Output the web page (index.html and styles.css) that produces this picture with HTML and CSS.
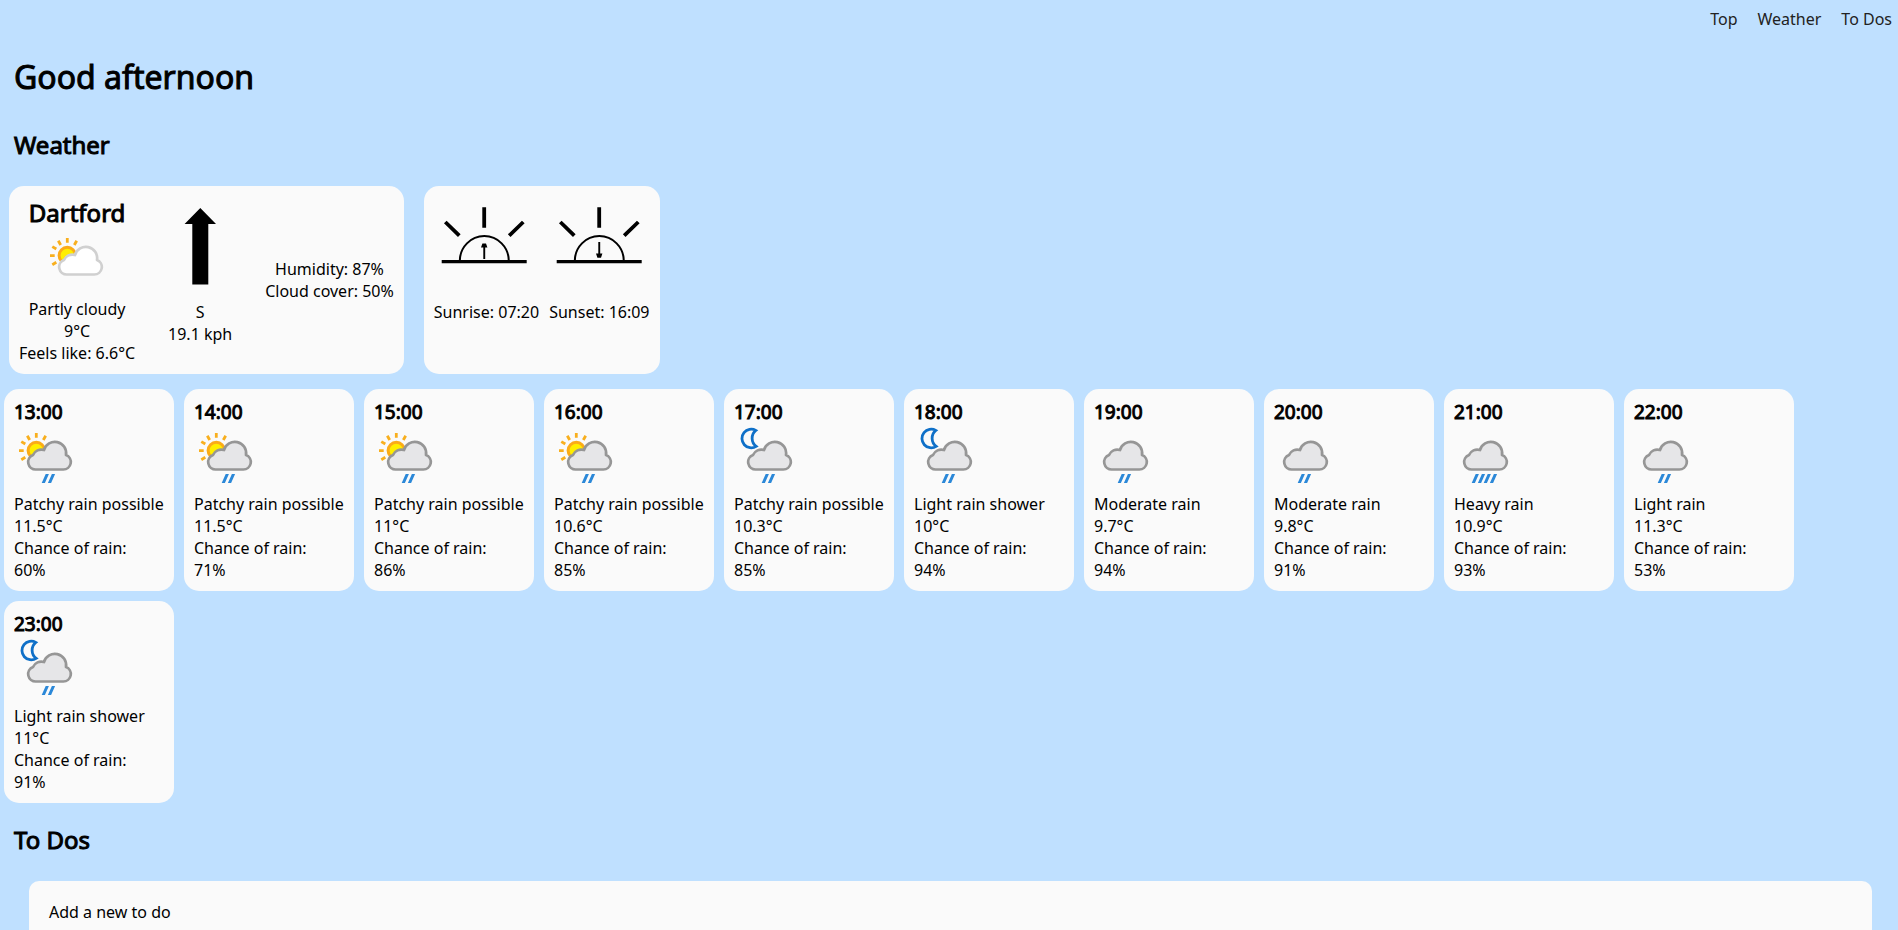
FILE: index.html
```html
<!DOCTYPE html>
<html lang="en">
<head>
<meta charset="utf-8">
<title>Dashboard</title>
<link rel="stylesheet" href="styles.css">
</head>
<body>
<svg class="sprite" aria-hidden="true">
  <symbol id="cloud" viewBox="0 0 64 64">
    <path d="M22 45.5A7.5 7.5 0 0 1 19 31A9 9 0 0 1 30 26A11.3 11.3 0 0 1 52 31A7.5 7.5 0 0 1 49.3 45.5Z" stroke-width="2.7" stroke-linejoin="round"/>
  </symbol>
  <symbol id="sun" viewBox="0 0 64 64">
    <circle cx="22.3" cy="26.5" r="8.2" fill="#ffee00" stroke="#fbab18" stroke-width="3"/>
    <path d="M22.3 9V13.8M31.7 11.7L29.3 16M13.3 11.7L15.7 16M7.3 17.6L11.3 20M5 26.6H9.7M7.3 35.7L11.3 33.3" stroke="#f8af1e" stroke-width="2.8" fill="none"/>
  </symbol>
  <symbol id="moon" viewBox="0 0 64 64">
    <path d="M21.8 6.4A9.3 9.3 0 1 0 22.2 22.4A10.2 10.2 0 0 1 21.8 6.4Z" fill="#fafafa" stroke="#0f70c8" stroke-width="2.8"/>
  </symbol>
  <symbol id="drops" viewBox="0 0 64 64">
    <path d="M31.7 50H34.9L30.9 59H27.7ZM37.9 50H41.1L37.1 59H33.9Z" fill="#2b88d8"/>
  </symbol>
  <symbol id="day-rain" viewBox="0 0 64 64">
    <use href="#sun"/><use href="#cloud" class="grey"/><use href="#drops"/>
  </symbol>
  <symbol id="night-rain" viewBox="0 0 64 64">
    <use href="#moon"/><use href="#cloud" class="grey"/><use href="#drops"/>
  </symbol>
  <symbol id="rain" viewBox="4 0 64 64">
    <use href="#cloud" class="grey" width="64" height="64"/><use href="#drops" width="64" height="64"/>
  </symbol>
  <symbol id="heavy-rain" viewBox="4 0 64 64">
    <use href="#cloud" class="grey" width="64" height="64"/><use href="#drops" x="-6" width="64" height="64"/><use href="#drops" x="6" width="64" height="64"/>
  </symbol>
  <symbol id="horizon" viewBox="0 0 100 100">
    <path d="M50.2 11.3V31.7M11.3 26L25.3 39.7M89.3 26L75.2 39.7" stroke="#000" stroke-width="3.8"/>
    <path d="M25.8 65A24.5 25 0 0 1 74.8 65" fill="none" stroke="#000" stroke-width="2"/>
    <path d="M7.7 65.6H92.7" stroke="#000" stroke-width="3.2"/>
  </symbol>
</svg>

<nav class="nav">
  <a href="#top">Top</a>
  <a href="#weather">Weather</a>
  <a href="#todos">To Dos</a>
</nav>

<main id="top">
  <h1>Good afternoon</h1>

  <section id="weather">
    <h2>Weather</h2>
    <div class="current">
      <div class="card now">
        <div class="now-col">
          <h2 class="place">Dartford</h2>
          <svg class="icon" viewBox="0 0 64 64"><use href="#sun"/><use href="#cloud" class="white"/></svg>
          <p>Partly cloudy</p><p>9°C</p><p>Feels like: 6.6°C</p>
        </div>
        <div class="now-col">
          <svg class="dial" viewBox="0 0 100 100"><path d="M50.3 12L66 28H58.3V88.4H42.3V28H34.6Z"/></svg>
          <p>S</p><p>19.1 kph</p>
        </div>
        <div class="now-col middle">
          <p>Humidity: 87%</p><p>Cloud cover: 50%</p>
        </div>
      </div>
      <div class="card sun-times">
        <div>
          <svg class="dial" viewBox="0 0 100 100"><use href="#horizon"/><path d="M49.3 63V51.5H47L48.4 47.4H52L53.4 51.5H51.2V63Z"/></svg>
          <p>Sunrise: 07:20</p>
        </div>
        <div>
          <svg class="dial" viewBox="0 0 100 100"><use href="#horizon"/><path d="M49.3 46V57.5H47L48.4 61.8H52L53.4 57.5H51.2V46Z"/></svg>
          <p>Sunset: 16:09</p>
        </div>
      </div>
    </div>

    <div class="hours">
      <article class="card hour"><h3>13:00</h3><svg class="icon"><use href="#day-rain"/></svg><p>Patchy rain possible</p><p>11.5°C</p><p>Chance of rain:</p><p>60%</p></article>
      <article class="card hour"><h3>14:00</h3><svg class="icon"><use href="#day-rain"/></svg><p>Patchy rain possible</p><p>11.5°C</p><p>Chance of rain:</p><p>71%</p></article>
      <article class="card hour"><h3>15:00</h3><svg class="icon"><use href="#day-rain"/></svg><p>Patchy rain possible</p><p>11°C</p><p>Chance of rain:</p><p>86%</p></article>
      <article class="card hour"><h3>16:00</h3><svg class="icon"><use href="#day-rain"/></svg><p>Patchy rain possible</p><p>10.6°C</p><p>Chance of rain:</p><p>85%</p></article>
      <article class="card hour"><h3>17:00</h3><svg class="icon"><use href="#night-rain"/></svg><p>Patchy rain possible</p><p>10.3°C</p><p>Chance of rain:</p><p>85%</p></article>
      <article class="card hour"><h3>18:00</h3><svg class="icon"><use href="#night-rain"/></svg><p>Light rain shower</p><p>10°C</p><p>Chance of rain:</p><p>94%</p></article>
      <article class="card hour"><h3>19:00</h3><svg class="icon"><use href="#rain"/></svg><p>Moderate rain</p><p>9.7°C</p><p>Chance of rain:</p><p>94%</p></article>
      <article class="card hour"><h3>20:00</h3><svg class="icon"><use href="#rain"/></svg><p>Moderate rain</p><p>9.8°C</p><p>Chance of rain:</p><p>91%</p></article>
      <article class="card hour"><h3>21:00</h3><svg class="icon"><use href="#heavy-rain"/></svg><p>Heavy rain</p><p>10.9°C</p><p>Chance of rain:</p><p>93%</p></article>
      <article class="card hour"><h3>22:00</h3><svg class="icon"><use href="#rain"/></svg><p>Light rain</p><p>11.3°C</p><p>Chance of rain:</p><p>53%</p></article>
      <article class="card hour"><h3>23:00</h3><svg class="icon"><use href="#night-rain"/></svg><p>Light rain shower</p><p>11°C</p><p>Chance of rain:</p><p>91%</p></article>
    </div>
  </section>

  <section id="todos">
    <h2>To Dos</h2>
    <div class="todo-panel">
      <p>Add a new to do</p>
    </div>
  </section>
</main>
</body>
</html>
```

FILE: styles.css
```css
* {
  box-sizing: border-box;
}

body {
  margin: 0;
  background: #bfe0ff;
  color: #000;
  font-family: "Noto Sans", "Open Sans", sans-serif;
  font-size: 16px;
  line-height: 22px;
}

h1,
h2,
h3,
p {
  margin: 0;
}

h1,
h2,
h3 {
  font-weight: 400;
  -webkit-text-stroke: 1px currentColor;
}

h1 {
  padding: 17px 14px 1px;
  font-size: 32px;
  line-height: 44px;
}

h2 {
  padding: 28px 14px 24px;
  font-size: 24px;
  line-height: 34px;
}

h3 {
  padding-top: 2px;
  font-size: 19px;
  line-height: 23px;
}

.sprite {
  display: none;
}

.grey {
  fill: #e6e6e8;
  stroke: #969696;
}

.white {
  fill: #fff;
  stroke: #d0d0d0;
}

.nav {
  display: flex;
  justify-content: flex-end;
  gap: 20px;
  padding: 8px 6px;
}

.nav a {
  color: #222;
  text-decoration: none;
}

.card {
  padding: 10px;
  border-radius: 15px;
  background: #fafafa;
}

.current {
  display: flex;
  gap: 20px;
  padding: 0 9px;
}

.now {
  display: flex;
  gap: 15px;
}

.now-col {
  display: flex;
  flex-direction: column;
  align-items: center;
}

.middle {
  justify-content: center;
}

.place {
  padding: 0;
  line-height: 33px;
}

.icon {
  display: block;
  width: 64px;
  height: 64px;
  margin-bottom: 5px;
}

.dial {
  display: block;
  width: 100px;
  height: 100px;
  margin-bottom: 5px;
}

.sun-times {
  display: flex;
  gap: 10px;
}

.hours {
  display: flex;
  flex-wrap: wrap;
  gap: 10px;
  padding: 15px 4px 0;
}

.hour {
  width: 170px;
}

#todos h2 {
  padding-top: 20px;
}

.todo-panel {
  margin: 0 26px 0 29px;
  padding: 20px;
  border-radius: 10px;
  background: #fafafa;
}
```
